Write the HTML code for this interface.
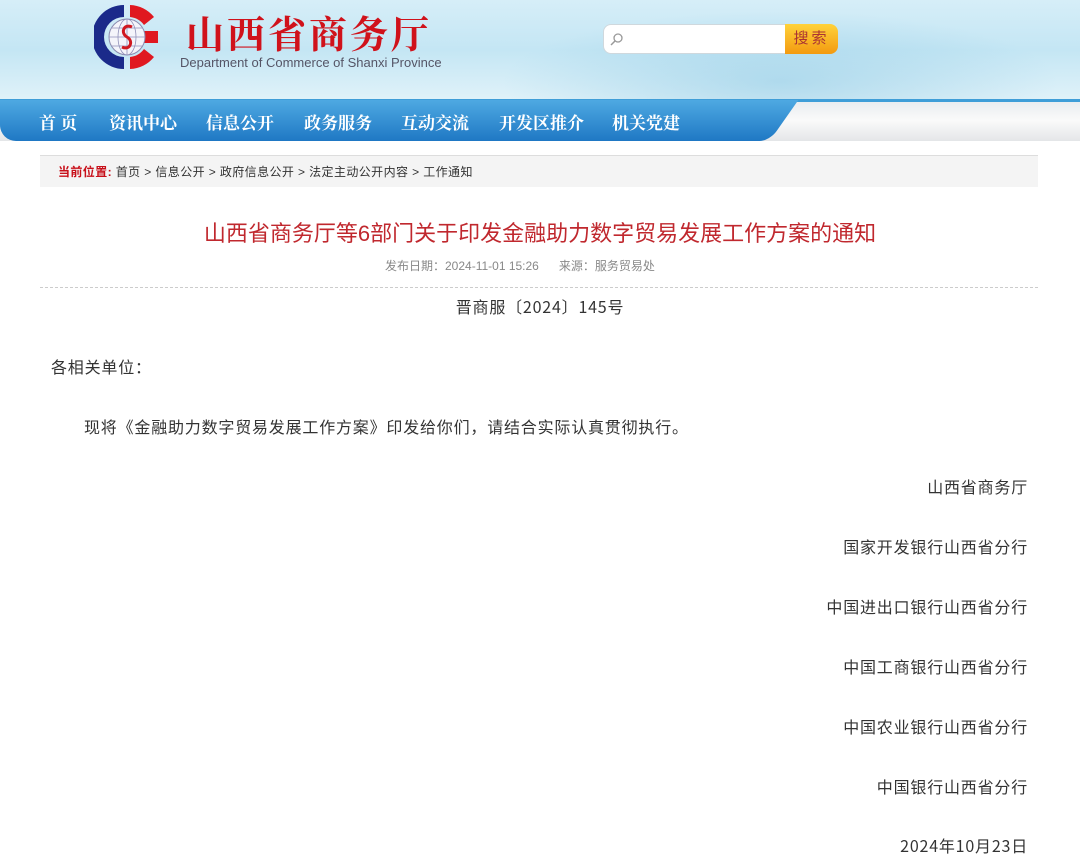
<!DOCTYPE html>
<html><head><meta charset="utf-8"><style>
*{margin:0;padding:0;box-sizing:border-box}
body{width:1080px;height:861px;overflow:hidden;background:#fff;font-family:"Liberation Sans","Noto Sans CJK SC",sans-serif;position:relative;color:#333}
.hdr{position:absolute;left:0;top:0;width:1080px;height:100px;background:linear-gradient(180deg,#d6eef8 0%,#c4e6f4 50%,#e0f2f9 100%)}
.hdr .m{position:absolute;left:500px;top:10px;width:560px;height:90px;background:radial-gradient(ellipse at 50% 80%,rgba(150,205,230,.6),rgba(200,235,248,0) 70%)}
.t1{position:absolute;left:186px;top:4px;font-size:38px;font-weight:bold;color:#d0121b;letter-spacing:3px;font-family:"Noto Serif CJK SC",serif}
.t2{position:absolute;left:180px;top:55px;font-size:13px;color:#556}
.search{position:absolute;left:603px;top:24px;width:234px;height:30px;background:#fff;border:1px solid #cfd8dd;border-radius:8px}
.btn{position:absolute;left:785px;top:24px;width:53px;height:30px;background:linear-gradient(#ffd23a,#f39a10);border-radius:0 8px 8px 0;color:#a33;font-size:15px;text-align:center;line-height:30px;letter-spacing:3px}
.nav{position:absolute;left:0;top:100px;width:1080px;height:41px;background:linear-gradient(#e8ecef,#fafafa 50%,#e4e6e8)}
.navb{position:absolute;left:0;top:100px;width:760px;height:41px;background:linear-gradient(#4ea9e2,#1f78c4);border-radius:0 0 30px 16px}
.navb:after{content:"";position:absolute;right:-24px;top:0;width:50px;height:41px;background:linear-gradient(#4ea9e2,#1f78c4);transform:skewX(-35deg);border-radius:0 0 10px 0}
.topline{position:absolute;left:0;top:99px;width:1080px;height:3px;background:#3f9ed8}
.nl span{position:absolute;top:109px;color:#fff;font-size:17px;font-weight:bold;font-family:"Noto Serif CJK SC",serif}
.bc{position:absolute;left:40px;top:155px;width:998px;height:32px;background:#f4f4f4;border-top:1px solid #ddd;font-size:12px;line-height:32px;padding-left:18px;color:#333;letter-spacing:.4px}
.bc b{color:#c8101a}
.title{position:absolute;left:0;width:1080px;top:216px;text-align:center;font-size:22px;color:#c0282e}
.meta{position:absolute;left:385px;top:257px;font-size:12px;color:#888}
.hr{position:absolute;left:40px;top:287px;width:998px;border-top:1px dashed #ccc}
p{position:absolute;font-size:16px;color:#333;white-space:nowrap;font-family:"Noto Sans CJK SC","Liberation Sans",sans-serif;letter-spacing:.8px}
.r{right:52px}
</style></head><body>
<div class="hdr"><div class="m"></div></div>
<svg style="position:absolute;left:94px;top:3px" width="66" height="68" viewBox="0 0 66 68">
<path d="M30 2 A32 32 0 0 0 30 66 L30 54 A20 20 0 0 1 30 14 Z" fill="#1b2a8a"/>
<path d="M36 2 A32 32 0 0 1 60 14 L50 22 A20 20 0 0 0 36 14 Z" fill="#e01820"/>
<path d="M36 66 A32 32 0 0 0 60 54 L50 46 A20 20 0 0 1 36 54 Z" fill="#e01820"/>
<rect x="36" y="28" width="28" height="12" fill="#e01820"/>
<circle cx="33" cy="34" r="18" fill="#f4f4fa" stroke="#8a8ab0" stroke-width="1"/>
<g stroke="#9090b8" stroke-width=".8" fill="none"><ellipse cx="33" cy="34" rx="9" ry="18"/><line x1="15" y1="34" x2="51" y2="34"/><line x1="18" y1="25" x2="48" y2="25"/><line x1="18" y1="43" x2="48" y2="43"/><line x1="33" y1="16" x2="33" y2="52"/></g>
<path d="M38 24 C30 20 26 30 33 34 C40 38 36 48 28 44" stroke="#d01820" stroke-width="3" fill="none"/>
</svg>
<div class="t1">山西省商务厅</div>
<div class="t2">Department of Commerce of Shanxi Province</div>
<div class="search"><svg style="position:absolute;left:6px;top:7px" width="14" height="14"><circle cx="8" cy="6" r="4" fill="none" stroke="#999" stroke-width="1.3"/><line x1="5" y1="9" x2="1" y2="13" stroke="#999" stroke-width="1.5"/></svg></div>
<div class="btn">搜索</div>
<div class="nav"></div><div class="topline"></div><div class="navb"></div>
<div class="nl"><span style="left:39px">首 页</span><span style="left:109px">资讯中心</span><span style="left:206px">信息公开</span><span style="left:304px">政务服务</span><span style="left:401px">互动交流</span><span style="left:499px">开发区推介</span><span style="left:612px">机关党建</span></div>
<div class="bc"><b>当前位置:</b> 首页 &gt; 信息公开 &gt; 政府信息公开 &gt; 法定主动公开内容 &gt; 工作通知</div>
<div class="title">山西省商务厅等6部门关于印发金融助力数字贸易发展工作方案的通知</div>
<div class="meta">发布日期：2024-11-01 15:26&nbsp;&nbsp;&nbsp;&nbsp;&nbsp;&nbsp;来源：服务贸易处</div>
<div class="hr"></div>
<p style="left:0;width:1080px;text-align:center;top:294px">晋商服〔2024〕145号</p>
<p style="left:51px;top:354px">各相关单位：</p>
<p style="left:84px;top:414px">现将《金融助力数字贸易发展工作方案》印发给你们，请结合实际认真贯彻执行。</p>
<p class="r" style="top:474px">山西省商务厅</p>
<p class="r" style="top:534px">国家开发银行山西省分行</p>
<p class="r" style="top:594px">中国进出口银行山西省分行</p>
<p class="r" style="top:654px">中国工商银行山西省分行</p>
<p class="r" style="top:714px">中国农业银行山西省分行</p>
<p class="r" style="top:774px">中国银行山西省分行</p>
<p class="r" style="top:833px">2024年10月23日</p>
</body></html>
